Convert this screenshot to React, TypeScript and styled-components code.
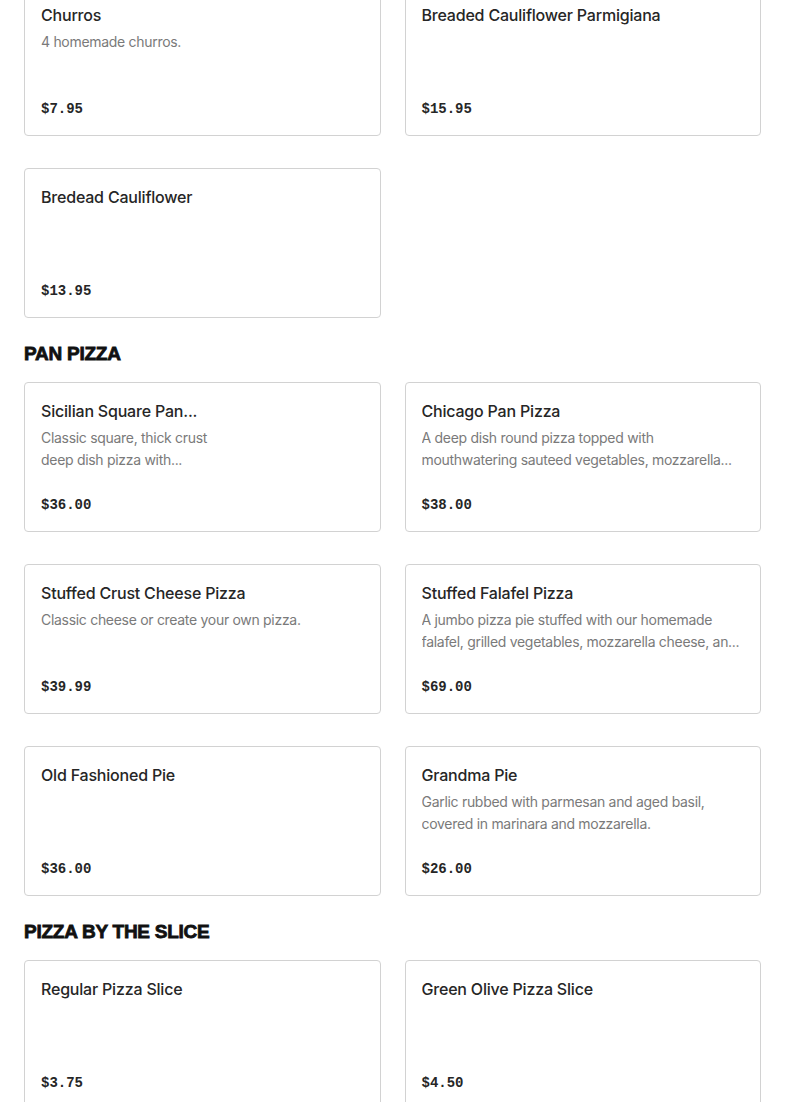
import React, {FC} from 'react';
import styled, {createGlobalStyle} from "styled-components";

const GlobalStyle = createGlobalStyle`
  html, body {
    margin: 0;
    padding: 0;
    background: #ffffff;
  }
  body {
    font-family: "Inter", "Liberation Sans", sans-serif;
    -webkit-font-smoothing: antialiased;
  }
`

const Page = styled.div`
  margin: -14px 24px 0;
  display: flex;
  flex-direction: column;
`

const Section = styled.section`
  display: flex;
  flex-direction: column;
`

const SectionTitle = styled.h2`
  margin: 24px 0 16px;
  font-family: "Liberation Sans", Arial, sans-serif;
  font-size: 19px;
  line-height: 24px;
  font-weight: 900;
  letter-spacing: -0.25px;
  color: #111111;
  -webkit-text-stroke: 0.8px #111111;
`

const Grid = styled.div`
  display: grid;
  grid-template-columns: 1fr 1fr;
  column-gap: 24px;
  row-gap: 32px;
`

const Card = styled.div`
  box-sizing: border-box;
  min-height: 150px;
  padding: 16px 16px 14px;
  border: 1px solid #d2d2d2;
  border-radius: 4px;
  background: #ffffff;
  display: flex;
  flex-direction: column;
`

const TextColumn = styled.div<{narrow?: boolean}>`
  display: flex;
  flex-direction: column;
  gap: 4px;
  max-width: ${props => props.narrow ? "190px" : "none"};
`

const Title = styled.div`
  font-size: 16px;
  line-height: 24px;
  font-weight: 500;
  letter-spacing: -0.2px;
  color: #262626;
  white-space: nowrap;
  overflow: hidden;
  text-overflow: ellipsis;
`

const Description = styled.div`
  font-size: 14px;
  line-height: 22px;
  letter-spacing: -0.3px;
  color: #7a7a7a;
  display: -webkit-box;
  -webkit-line-clamp: 2;
  -webkit-box-orient: vertical;
  overflow: hidden;
`

const Price = styled.div`
  margin-top: auto;
  font-family: "Liberation Mono", "DejaVu Sans Mono", monospace;
  font-size: 14px;
  line-height: 24px;
  font-weight: 700;
  color: #262626;
`

type Item = {
    name: string,
    description?: string,
    price: string,
    narrow?: boolean
}

type SectionData = {
    title?: string,
    items: Item[]
}

const sections: SectionData[] = [
    {
        items: [
            {name: "Churros", description: "4 homemade churros.", price: "$7.95"},
            {name: "Breaded Cauliflower Parmigiana", price: "$15.95"},
            {name: "Bredead Cauliflower", price: "$13.95"},
        ]
    },
    {
        title: "PAN PIZZA",
        items: [
            {name: "Sicilian Square Pan...", description: "Classic square, thick crust deep dish pizza with...", price: "$36.00", narrow: true},
            {name: "Chicago Pan Pizza", description: "A deep dish round pizza topped with mouthwatering sauteed vegetables, mozzarella...", price: "$38.00"},
            {name: "Stuffed Crust Cheese Pizza", description: "Classic cheese or create your own pizza.", price: "$39.99"},
            {name: "Stuffed Falafel Pizza", description: "A jumbo pizza pie stuffed with our homemade falafel, grilled vegetables, mozzarella cheese, an...", price: "$69.00"},
            {name: "Old Fashioned Pie", price: "$36.00"},
            {name: "Grandma Pie", description: "Garlic rubbed with parmesan and aged basil, covered in marinara and mozzarella.", price: "$26.00"},
        ]
    },
    {
        title: "PIZZA BY THE SLICE",
        items: [
            {name: "Regular Pizza Slice", price: "$3.75"},
            {name: "Green Olive Pizza Slice", price: "$4.50"},
        ]
    },
];

const MenuCard: FC<{item: Item}> = ({item}) => (
    <Card>
        <TextColumn narrow={item.narrow}>
            <Title>{item.name}</Title>
            {item.description && <Description>{item.description}</Description>}
        </TextColumn>
        <Price>{item.price}</Price>
    </Card>
);

const App: FC = () => (
    <>
        <GlobalStyle/>
        <Page>
            {sections.map((section, i) =>
                <Section key={i}>
                    {section.title && <SectionTitle>{section.title}</SectionTitle>}
                    <Grid>
                        {section.items.map(item => <MenuCard key={item.name} item={item}/>)}
                    </Grid>
                </Section>
            )}
        </Page>
    </>
);

export default App;
